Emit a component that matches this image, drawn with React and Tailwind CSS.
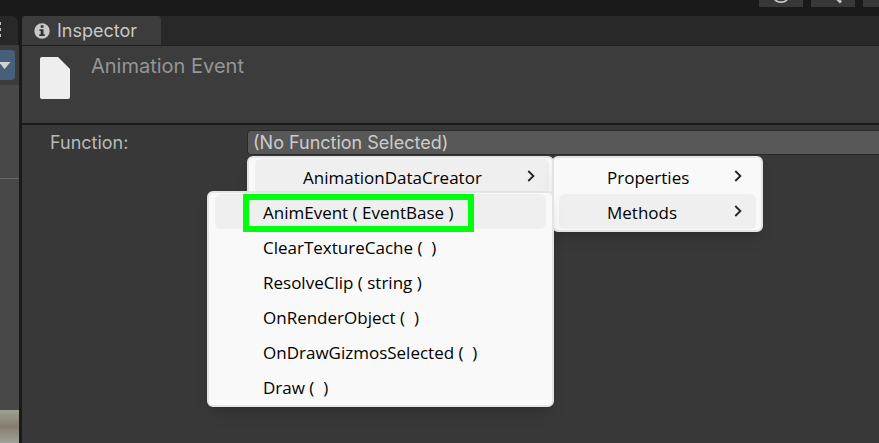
import React from "react";

const methods = [
  "AnimEvent ( EventBase )",
  "ClearTextureCache (  )",
  "ResolveClip ( string )",
  "OnRenderObject (  )",
  "OnDrawGizmosSelected (  )",
  "Draw (  )",
];

function Chevron() {
  return (
    <svg className="mb-1 h-3 w-2" viewBox="0 0 8 12" fill="none" stroke="#222222" strokeWidth="1.8" aria-hidden="true">
      <path d="M1.3 1 6.4 6 1.3 11" />
    </svg>
  );
}

function Menu({ label, className, children }) {
  return (
    <div
      role="menu"
      aria-label={label}
      className={`absolute rounded-md border-2 border-[#e4e4e4] bg-[#f9f9f9] py-px font-['Open_Sans','Noto_Sans',sans-serif] text-[17px] text-black shadow-lg ${className}`}
    >
      {children}
    </div>
  );
}

function MenuItem({ active, children, submenu }) {
  return (
    <button
      type="button"
      role="menuitem"
      className={`flex h-[35px] w-full items-center justify-between rounded-md pt-0.5 pr-3.5 pl-12 text-left whitespace-pre ${active ? "bg-[#efefef]" : ""}`}
    >
      <span>{children}</span>
      {submenu && <Chevron />}
    </button>
  );
}

function TopBar() {
  return (
    <header className="flex h-4 items-start justify-end gap-2 bg-[#1a1a1a]">
      <button type="button" aria-label="History" className="flex h-[7px] w-11 justify-center overflow-hidden bg-[#383838]">
        <svg className="h-[7px] w-5" viewBox="0 0 20 7" fill="none" stroke="#c4c4c4" strokeWidth="1.7" aria-hidden="true">
          <path d="M3.5 -1C6 3.2 14 3.2 16.5 -1" />
        </svg>
      </button>
      <button type="button" aria-label="Search" className="flex h-[7px] w-11 justify-center overflow-hidden bg-[#383838]">
        <svg className="h-[7px] w-5" viewBox="0 0 20 7" fill="none" stroke="#c4c4c4" strokeWidth="3" aria-hidden="true">
          <path d="M14.5 -1 18 2.5" />
        </svg>
      </button>
      <button type="button" aria-label="Layers" className="h-[7px] w-4 bg-[#383838]" />
    </header>
  );
}

function SidePane() {
  return (
    <aside className="flex w-[19px] shrink-0 flex-col bg-[#484848]">
      <div className="h-[29px] bg-[#1a1a1a]">
        <button type="button" aria-label="Pane menu" className="block h-full w-[18px] rounded-tr-md bg-[#282828]">
          <svg className="h-[29px] w-[18px]" viewBox="0 0 18 29" fill="#c4c4c4" aria-hidden="true">
            <path d="M0 6h1v3H0zM0 12h1v3H0zM0 18h1v3H0z" />
          </svg>
        </button>
      </div>
      <div className="h-10 bg-[#3c3c3c] pt-[5px]">
        <button type="button" aria-label="View options" className="block h-[30px] w-[15px] rounded-r bg-[#46607c]">
          <svg className="h-[30px] w-[15px]" viewBox="0 0 15 30" fill="#d2d2d2" aria-hidden="true">
            <path d="M-1 12H10.500L4.500 19Z" />
          </svg>
        </button>
      </div>
      <div className="h-[94px] border-b border-[#6a6a6a]" />
      <div className="flex-1" />
      <div className="h-[33px] bg-linear-to-b from-[#9da292] via-[#867c70] to-[#a0a298]" />
    </aside>
  );
}

function FunctionField() {
  return (
    <div className="flex items-center pt-[5px] pl-7 text-[#b8b8b8]">
      <label htmlFor="function" className="w-[197px] shrink-0">Function:</label>
      <div className="relative min-w-0 flex-1">
        <select
          id="function"
          className="block h-[25px] w-full appearance-none rounded-l border-y border-l border-[#2a2a2a] bg-[#585858] pl-[5px] leading-[23px] text-[#cccccc] outline-none"
        >
          <option>(No Function Selected)</option>
        </select>
        <Menu label="Function" className="top-[26px] left-0 h-[76px] w-[307px] pr-[3px] pl-1.5">
          <MenuItem active submenu>AnimationDataCreator</MenuItem>
        </Menu>
        <Menu label="AnimationDataCreator" className="top-[26px] left-[305px] w-[211px] px-[5px]">
          <MenuItem submenu>Properties</MenuItem>
          <MenuItem active submenu>Methods</MenuItem>
        </Menu>
        <Menu label="Methods" className="top-[61px] -left-10 w-[347px] px-1.5">
          {methods.map((method, index) => (
            <MenuItem key={method} active={index === 0}>{method}</MenuItem>
          ))}
          <div className="pointer-events-none absolute top-px left-[34px] h-[38px] w-[231px] border-6 border-[#00ff0c]" />
        </Menu>
      </div>
    </div>
  );
}

function Inspector() {
  return (
    <main className="flex min-w-0 flex-1 flex-col bg-[#383838]">
      <div className="flex h-[29px] bg-[#282828]">
        <button type="button" className="flex w-[139px] items-center gap-[7px] rounded-t bg-[#3c3c3c] pl-3 text-[#c8c8c8]">
          <svg className="size-4" viewBox="0 0 16 16" aria-hidden="true">
            <circle cx="8" cy="8" r="7.700" fill="#c8c8c8" />
            <path d="M6.700 2.300h2.800v2.500H6.700zM5.500 6.200h4v5h1.300v1.900H5.300v-1.900h1.400V8H5.500z" fill="#333333" />
          </svg>
          Inspector
        </button>
      </div>
      <section className="flex h-20 items-start border-t border-b-2 border-t-[#202020] border-b-[#1a1a1a] bg-[#3c3c3c] pt-2 pl-[18px]">
        <svg className="mt-[3px] h-[42px] w-[30px]" viewBox="0 0 30 42" fill="#eeeeee" aria-hidden="true">
          <path d="M2 0H18L30 12V40Q30 42 28 42H2Q0 42 0 40V2Q0 0 2 0Z" />
        </svg>
        <h1 className="ml-[21px] text-xl leading-6 text-[#959595]">Animation Event</h1>
      </section>
      <FunctionField />
    </main>
  );
}

export default function App() {
  return (
    <div className="flex min-h-screen flex-col overflow-hidden bg-[#1a1a1a] font-['Inter',sans-serif] text-lg leading-6">
      <TopBar />
      <div className="flex flex-1 gap-[3px]">
        <SidePane />
        <Inspector />
      </div>
    </div>
  );
}
